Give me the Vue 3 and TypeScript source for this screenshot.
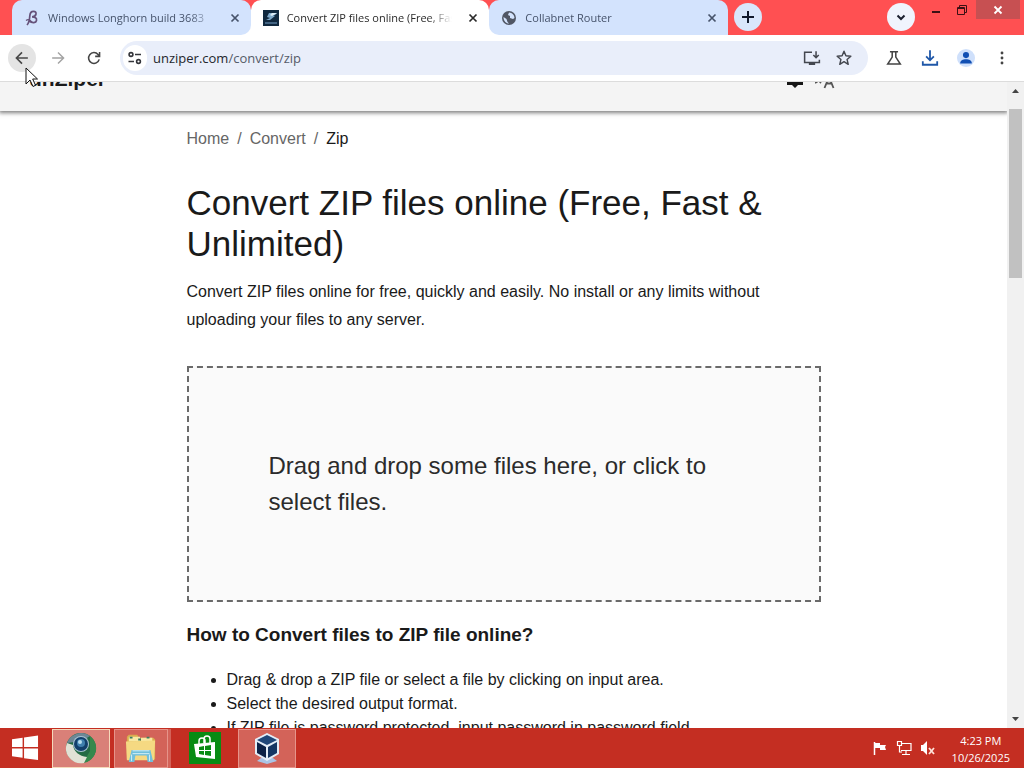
<script setup lang="ts">
interface Tab {
  title: string
  icon: 'beta' | 'zip' | 'globe'
  active: boolean
}

const tabs: Tab[] = [
  { title: 'Windows Longhorn build 3683', icon: 'beta', active: false },
  { title: 'Convert ZIP files online (Free, Fast', icon: 'zip', active: true },
  { title: 'Collabnet Router', icon: 'globe', active: false },
]

const steps: string[] = [
  'Drag & drop a ZIP file or select a file by clicking on input area.',
  'Select the desired output format.',
  'If ZIP file is password protected, input password in password field.',
]
</script>

<template>
  <div class="desktop">
    <header class="tabstrip">
      <div class="tabs">
        <div v-for="tab in tabs" :key="tab.title" class="tab" :class="{ active: tab.active }">
          <svg v-if="tab.icon === 'beta'" class="favicon" viewBox="0 0 16 16" fill="none" stroke="#66527a" stroke-width="1.7">
            <path d="M3 15C5 13 5.500 10 5.800 6C6 2.500 7.500 1.300 9.500 1.300C11.500 1.300 12.300 2.600 12 4C11.700 5.800 10 6.800 8 6.800C11 6.800 13 8 12.500 10.500C12 13 8.500 13.500 5 11" />
            <path d="M2 10.500C4 9 6 9.500 8 12" stroke-width="1.200" />
          </svg>
          <svg v-else-if="tab.icon === 'zip'" class="favicon" viewBox="0 0 16 16">
            <rect width="16" height="16" fill="#10283f" />
            <path d="M6 3h8l-2 2h-2l2 1-5 4H3l4-2-3-1z" fill="#7fa9cb" />
            <path d="M9 3h5l-5 3-2-1z" fill="#dcebf5" />
            <path d="M2 13h12" stroke="#54799b" stroke-width="1.500" />
          </svg>
          <svg v-else class="favicon" viewBox="0 0 16 16">
            <circle cx="8" cy="8" r="7" fill="#505664" />
            <path d="M2.500 7l3 2 1 3 1.500 1.500c-3 0-5.500-2.500-5.500-6.500zM8 2.500L7 5l2 1v2l3 1 1.500-1C13.500 5 11 2.700 8 2.500z" fill="#d3e3fd" />
          </svg>
          <span class="tab-title">{{ tab.title }}</span>
          <button class="tab-close" aria-label="Close tab">
            <svg viewBox="0 0 10 10" fill="none" stroke="currentColor" stroke-width="1.700"><path d="M1.500 1.500l7 7M8.500 1.500l-7 7" /></svg>
          </button>
        </div>
      </div>
      <button class="round new-tab" aria-label="New tab">
        <svg viewBox="0 0 14 14" fill="none" stroke="#10182b" stroke-width="2"><path d="M7 1v12M1 7h12" /></svg>
      </button>
      <div class="window-controls">
        <button class="round search-tabs" aria-label="Search tabs">
          <svg viewBox="0 0 14 14" fill="none" stroke="#1b2030" stroke-width="2"><path d="M3.500 5.500L7 9l3.500-3.500" /></svg>
        </button>
        <button class="win" aria-label="Minimize">
          <svg viewBox="0 0 12 12"><path d="M2 7h8v2H2z" fill="#3c1014" /></svg>
        </button>
        <button class="win" aria-label="Restore">
          <svg viewBox="0 0 12 12" fill="none" stroke="#3c1014"><path d="M1.500 3.500h7v7h-7zM1.500 4.500h7M3.500 3V1.500h7v7H9" /></svg>
        </button>
        <button class="win close" aria-label="Close">
          <svg viewBox="0 0 12 12" fill="none" stroke="#fff" stroke-width="1.800"><path d="M2.500 2.500l7 7M9.500 2.500l-7 7" /></svg>
        </button>
      </div>
    </header>

    <nav class="toolbar" aria-label="Browser toolbar">
      <button class="tool back" aria-label="Back">
        <svg viewBox="0 0 20 20" fill="none" stroke="#474747" stroke-width="1.800"><path d="M16.500 10H4.500M10 3.800L3.800 10l6.200 6.200" /></svg>
      </button>
      <button class="tool" aria-label="Forward">
        <svg viewBox="0 0 20 20" fill="none" stroke="#a3a3a3" stroke-width="1.600"><path d="M3.500 10h12M10 3.800l6.200 6.200-6.200 6.200" /></svg>
      </button>
      <button class="tool" aria-label="Reload">
        <svg viewBox="0 0 20 20" fill="none" stroke="#444" stroke-width="1.700"><path d="M15.800 11.500A6 6 0 1 1 14.500 6L16 7.700M16.200 3.300v4.900h-4.900" /></svg>
      </button>
      <div class="omnibox">
        <button class="site-info" aria-label="Site information">
          <svg viewBox="0 0 16 16" fill="none" stroke="#34353a" stroke-width="1.600"><circle cx="4" cy="4.500" r="1.900" /><path d="M8 4.500h6M1.500 11.500h5.500" /><circle cx="11.500" cy="11.500" r="1.900" /></svg>
        </button>
        <div class="url">
          <span class="host">unziper.com</span><span>/convert/zip</span>
        </div>
        <button class="tool" aria-label="Install app">
          <svg viewBox="0 0 20 20" fill="none" stroke="#44474f" stroke-width="1.700"><path d="M10 3.500H1.800v11.500h16.400v-3M14.500 2.500v7M11.500 6.700l3 3 3-3" /><path d="M6.500 16.500h7" stroke-width="2.500" /></svg>
        </button>
        <button class="tool" aria-label="Bookmark this tab">
          <svg viewBox="0 0 20 20" fill="none" stroke="#44474f" stroke-width="1.600" stroke-linejoin="round"><path d="M10 2.500l2.100 5.100 5.500.4-4.200 3.600 1.300 5.400L10 14.100 5.300 17l1.300-5.400L2.400 8l5.500-.4z" /></svg>
        </button>
      </div>
      <button class="tool" aria-label="Experiments">
        <svg viewBox="0 0 20 20" fill="none" stroke="#444" stroke-width="1.700"><path d="M5.500 3h9M8 3v6L3 16.700h14L12 9V3" /></svg>
      </button>
      <button class="tool" aria-label="Downloads">
        <svg viewBox="0 0 20 20" fill="none" stroke="#1f57a8" stroke-width="2"><path d="M10 1.500v11M5.700 8.300L10 12.600l4.300-4.300M2 13.500v4h16v-4" /></svg>
      </button>
      <button class="tool" aria-label="Profile">
        <svg viewBox="0 0 20 20"><circle cx="10" cy="10" r="10" fill="#cfe0fb" /><circle cx="10" cy="6.800" r="3.400" fill="#114fb3" /><path d="M3.500 16c0-3.200 3-4.600 6.500-4.600s6.500 1.400 6.500 4.600z" fill="#114fb3" /></svg>
      </button>
      <button class="tool" aria-label="Menu">
        <svg viewBox="0 0 20 20" fill="#444"><circle cx="10" cy="4.500" r="1.600" /><circle cx="10" cy="10" r="1.600" /><circle cx="10" cy="15.500" r="1.600" /></svg>
      </button>
    </nav>

    <div class="viewport">
      <div class="page">
        <div class="appbar-clip">
          <div class="appbar">
            <a class="brand" href="#">unZiper</a>
            <div class="appbar-actions">
              <button aria-label="Theme">
                <svg viewBox="0 0 24 24" fill="#161616"><path d="M4 4h16v14h-5l-3 3-3-3H4z" /></svg>
              </button>
              <button aria-label="Language">
                <svg viewBox="0 0 24 24" fill="none" stroke="#555" stroke-width="1.800"><path d="M0 5h11M5 2v3M9 5C7 10 4 14 0 16M2 9c1 3 2 5 4 7M9.500 21l4.500-11 4.500 11M11.500 16.500h5" /></svg>
              </button>
            </div>
          </div>
        </div>

        <main class="content">
          <nav class="crumbs" aria-label="Breadcrumb">
            <a href="#">Home</a><span>/</span><a href="#">Convert</a><span>/</span><a class="current" href="#">Zip</a>
          </nav>
          <h1>Convert ZIP files online (Free, Fast &amp; Unlimited)</h1>
          <p class="lead">Convert ZIP files online for free, quickly and easily. No install or any limits without uploading your files to any server.</p>
          <button class="dropzone">Drag and drop some files here, or click to select files.</button>
          <h2>How to Convert files to ZIP file online?</h2>
          <ul>
            <li v-for="step in steps" :key="step">{{ step }}</li>
          </ul>
        </main>
      </div>
      <div class="scrollbar" aria-hidden="true">
        <svg viewBox="0 0 17 17" fill="#444"><path d="M5 11h7L8.500 7z" /></svg>
        <div class="track"><div class="thumb"></div></div>
        <svg viewBox="0 0 17 17" fill="#444"><path d="M5 6h7l-3.500 4z" /></svg>
      </div>
    </div>

    <footer class="taskbar">
      <button class="start" aria-label="Start">
        <svg viewBox="0 0 28 26" fill="#fff"><path d="M0 4l11-1.700V12H0zM12.500 2L27 0v12H12.500zM0 13.500h11v9.700L0 21.500zM12.500 13.500H27v12l-14.500-2z" /></svg>
      </button>
      <button class="task focused" aria-label="Browser">
        <svg viewBox="0 0 32 32">
          <circle cx="16" cy="16" r="15" fill="#246b45" />
          <path d="M2 11A15 15 0 0 1 25 4L17 9z" fill="#6d8796" />
          <path d="M25 4a15 15 0 0 1-7 27l7-12z" fill="#35884c" />
          <path d="M2 11a15 15 0 0 0 17 20l3-6C14 24 9 20 8 13z" fill="#e1e2d5" />
          <circle cx="16" cy="12" r="8" fill="#a9c3d3" />
          <circle cx="16" cy="12" r="7" fill="#123f6b" />
          <circle cx="16" cy="11" r="4" fill="#3f7fae" /><circle cx="15" cy="10" r="2" fill="#b7dded" />
        </svg>
      </button>
      <button class="task stacked" aria-label="File Explorer">
        <svg viewBox="0 0 34 32">
          <path d="M2 4l2-2h9l2 3h15l2 2v21H2z" fill="#d9ad4d" />
          <path d="M4 4h12v5H4zM17 5h12v5H17z" fill="#f8e8a2" />
          <path d="M1 9l31-1-1 21H2z" fill="#f5d982" />
          <path d="M5 5h3M14 7h3M23 5h3" stroke="#397e63" stroke-width="2" />
          <path d="M7 18h20l3 13h-6l-1-7H11l-1 7H4z" fill="#70bfdb" />
          <path d="M8 19h18M8 22h18M7 23v7M26 23v7" stroke="#d9f2f7" />
        </svg>
      </button>
      <button class="task plain" aria-label="Store">
        <svg viewBox="0 0 32 32">
          <rect width="32" height="32" fill="#088b13" />
          <path d="M5 12l21-2v17L7 25z" fill="#fff" />
          <path d="M10 12V9c0-4 6-4 6 0v3M15 11V7c0-4 6-4 6 0v4" fill="none" stroke="#fff" stroke-width="1.500" />
          <path d="M10 15l5-1v4h-5zM16 14l6-1v5h-6zM10 19h5v4l-5-1zM16 19h6v5l-6-1z" fill="#088b13" />
        </svg>
      </button>
      <button class="task" aria-label="VirtualBox">
        <svg viewBox="0 0 32 32">
          <path d="M10 26h12l4 3-10 3-10-3z" fill="#aac4e5" />
          <path d="M16 1l12 6v15l-12 7-12-7V7z" fill="#e3edf7" />
          <path d="M16 3l10 5-10 5L6 8z" fill="#204779" />
          <path d="M6 10l9 5v11l-9-5z" fill="#0c2146" />
          <path d="M26 10l-9 5v11l9-5z" fill="#153663" />
        </svg>
      </button>
      <div class="tray">
        <svg viewBox="0 0 16 16"><path d="M2.500 2v13" stroke="#fff" stroke-width="1.500" /><path d="M3 3h5v2h6l-1 2 1 3H8V8H3z" fill="#fff" /></svg>
        <svg viewBox="0 0 16 16" fill="none" stroke="#fff" stroke-width="1.200"><path d="M6 3.500h9v7H5M10 11v3M6 14.500h8M1.500 1.500h4v4h-4zM3.500 6v6H6" /></svg>
        <svg viewBox="0 0 16 16"><path d="M1 5h2l4-4v14l-4-4H1z" fill="#fff" /><path d="M9 8l5 6M14 8l-5 6" stroke="#ffe1d8" stroke-width="1.800" /></svg>
      </div>
      <div class="clock"><time>4:23 PM</time><time>10/26/2025</time></div>
    </footer>

    <svg class="pointer" viewBox="0 0 14 21" aria-hidden="true"><path d="M1 1v16l4-4 3 6.500 2.500-1.200L7.700 12H12.500z" fill="#fff" stroke="#111" /></svg>
  </div>
</template>

<style>
body {
  margin: 0;
  overflow: hidden;
}
</style>

<style scoped>
.desktop {
  position: relative;
  display: flex;
  flex-direction: column;
  height: 100vh;
  overflow: hidden;
  background: #fff;
  color: #1a1a1a;
  font-family: "Liberation Sans", Arial, sans-serif;
}
button {
  margin: 0;
  padding: 0;
  border: 0;
  background: none;
  font: inherit;
  color: inherit;
}
svg {
  display: block;
  flex: none;
}
a {
  color: inherit;
  text-decoration: none;
}

/* Tabs */
.tabstrip {
  display: flex;
  flex: none;
  height: 35px;
  background: #ff5052;
  font-family: "Open Sans", "Noto Sans", sans-serif;
  font-size: 11px;
}
.tabs {
  display: flex;
  flex: 0 1 728px;
  min-width: 0;
  box-sizing: border-box;
  padding-left: 12px;
  background: linear-gradient(transparent 50%, #fff 50%) content-box;
}
.tab {
  display: flex;
  align-items: center;
  flex: 1 1 0;
  min-width: 0;
  box-sizing: border-box;
  padding: 0 11px 0 12px;
  border-radius: 10px;
  background: #d3e3fd;
  color: #46536b;
}
.tab:first-child {
  border-bottom-left-radius: 0;
}
.tab:last-child {
  border-bottom-right-radius: 0;
}
.tab.active {
  border-radius: 10px 10px 0 0;
  background: #fff;
  color: #2a2a2a;
}
.favicon {
  width: 16px;
  height: 16px;
}
.tab-title {
  flex: 1;
  min-width: 0;
  margin: 0 16px 0 8px;
  overflow: hidden;
  white-space: nowrap;
  mask-image: linear-gradient(to right, #000 calc(100% - 24px), transparent);
}
.tab-close svg {
  width: 10px;
  height: 10px;
}
.round {
  display: grid;
  place-items: center;
  flex: none;
  width: 28px;
  height: 28px;
  border-radius: 50%;
  background: #d9e6fb;
}
.round svg {
  width: 14px;
  height: 14px;
}
.new-tab {
  margin: 3px 0 0 6px;
}
.window-controls {
  display: flex;
  align-items: flex-start;
  margin-left: auto;
}
.search-tabs {
  margin: 3px 8px 0 0;
  background: #f0f4fd;
}
.win {
  display: grid;
  place-items: center;
  width: 26px;
  height: 19px;
}
.win svg {
  width: 12px;
  height: 12px;
}
.win.close {
  width: 44px;
  margin: 0 4px 0 1px;
  background: #c75052;
}

/* Toolbar */
.toolbar {
  display: flex;
  align-items: center;
  flex: none;
  box-sizing: border-box;
  height: 47px;
  padding: 0 8px;
  gap: 8px;
  border-bottom: 1px solid #dcdcdc;
  background: #fff;
}
.tool {
  display: grid;
  place-items: center;
  flex: none;
  width: 28px;
  height: 28px;
  border-radius: 50%;
}
.tool svg {
  width: 18px;
  height: 18px;
}
.tool.back {
  background: #e4e4e4;
}
.omnibox {
  display: flex;
  align-items: center;
  flex: 1;
  min-width: 0;
  box-sizing: border-box;
  height: 34px;
  margin: 0 4px;
  padding: 0 10px 0 3px;
  gap: 4px;
  border-radius: 17px;
  background: #e9eefa;
}
.site-info {
  display: grid;
  place-items: center;
  flex: none;
  width: 24px;
  height: 26px;
  border-radius: 13px;
  background: #fff;
}
.site-info svg {
  width: 16px;
  height: 16px;
}
.url {
  flex: 1;
  min-width: 0;
  margin-left: 2px;
  overflow: hidden;
  white-space: nowrap;
  font-family: "Open Sans", "Noto Sans", sans-serif;
  font-size: 13px;
  color: #555b68;
}
.host {
  color: #24262c;
}

/* Page */
.viewport {
  display: flex;
  flex: 1;
  min-height: 0;
}
.page {
  flex: 1;
  min-width: 0;
  overflow: hidden;
}
.appbar-clip {
  display: flex;
  align-items: flex-end;
  height: 29px;
  overflow: hidden;
  background: #f4f4f4;
  box-shadow: 0 1px 4px 1px rgba(0, 0, 0, 0.5);
}
.appbar {
  display: flex;
  align-items: center;
  flex: 1;
  height: 64px;
  padding: 0 168px 0 29px;
}
.brand {
  font-size: 21px;
  font-weight: 700;
}
.appbar-actions {
  display: flex;
  gap: 8px;
  margin-left: auto;
}
.appbar-actions svg {
  width: 24px;
  height: 24px;
}
.content {
  box-sizing: border-box;
  max-width: 682px;
  margin: 0 auto;
  padding: 16px 24px 0;
}
.crumbs {
  display: flex;
  gap: 8px;
  font-size: 16px;
  line-height: 24px;
  color: #666;
}
.crumbs .current {
  color: #1a1a1a;
}
h1 {
  margin: 31px 0 14px;
  font-size: 35px;
  font-weight: 400;
  line-height: 41px;
}
.lead {
  margin: 0 0 32px;
  font-size: 16px;
  line-height: 28px;
}
.dropzone {
  display: block;
  box-sizing: border-box;
  width: 100%;
  padding: 80px;
  border: 2px dashed #6a6a6a;
  background: #fafafa;
  color: #2b2b2b;
  font-size: 24px;
  line-height: 36px;
  text-align: left;
}
h2 {
  margin: 21px 0;
  font-size: 19px;
  font-weight: 700;
  line-height: 24px;
}
ul {
  margin: 0;
  padding-left: 40px;
  font-size: 16px;
  line-height: 24px;
}
.scrollbar {
  display: flex;
  flex-direction: column;
  flex: none;
  width: 17px;
  background: #f1f1f1;
}
.scrollbar svg {
  width: 17px;
  height: 17px;
}
.track {
  flex: 1;
  padding: 10px 2px 0;
}
.thumb {
  height: 28%;
  background: #c1c1c1;
}

/* Taskbar */
.taskbar {
  display: flex;
  align-items: center;
  flex: none;
  height: 40px;
  background: #c42e22;
  color: #fff;
}
.start {
  display: grid;
  place-items: center;
  width: 50px;
  height: 40px;
}
.start svg {
  width: 27px;
  height: 26px;
}
.task {
  display: grid;
  place-items: center;
  box-sizing: border-box;
  width: 58px;
  height: 39px;
  margin-left: 2px;
  border: 1px solid #e6948a;
  background: #d36359;
}
.task svg {
  width: 32px;
  height: 32px;
}
.task.focused {
  border-color: #f5d9bb;
  background: #d98078;
}
.task.stacked {
  width: 54px;
  margin: 0 6px 0 4px;
  box-shadow: 3px 0 0 #d36359;
}
.task.plain {
  margin-right: 2px;
  border-color: transparent;
  background: none;
}
.tray {
  display: flex;
  gap: 8px;
  margin-left: auto;
}
.tray svg {
  width: 16px;
  height: 16px;
}
.clock {
  display: flex;
  flex-direction: column;
  align-items: center;
  margin: 2px 14px 0 16px;
  font-family: "Open Sans", "Noto Sans", sans-serif;
  font-size: 11px;
  line-height: 17px;
}
.pointer {
  position: absolute;
  top: 67px;
  left: 25px;
  width: 14px;
  height: 21px;
}
</style>
